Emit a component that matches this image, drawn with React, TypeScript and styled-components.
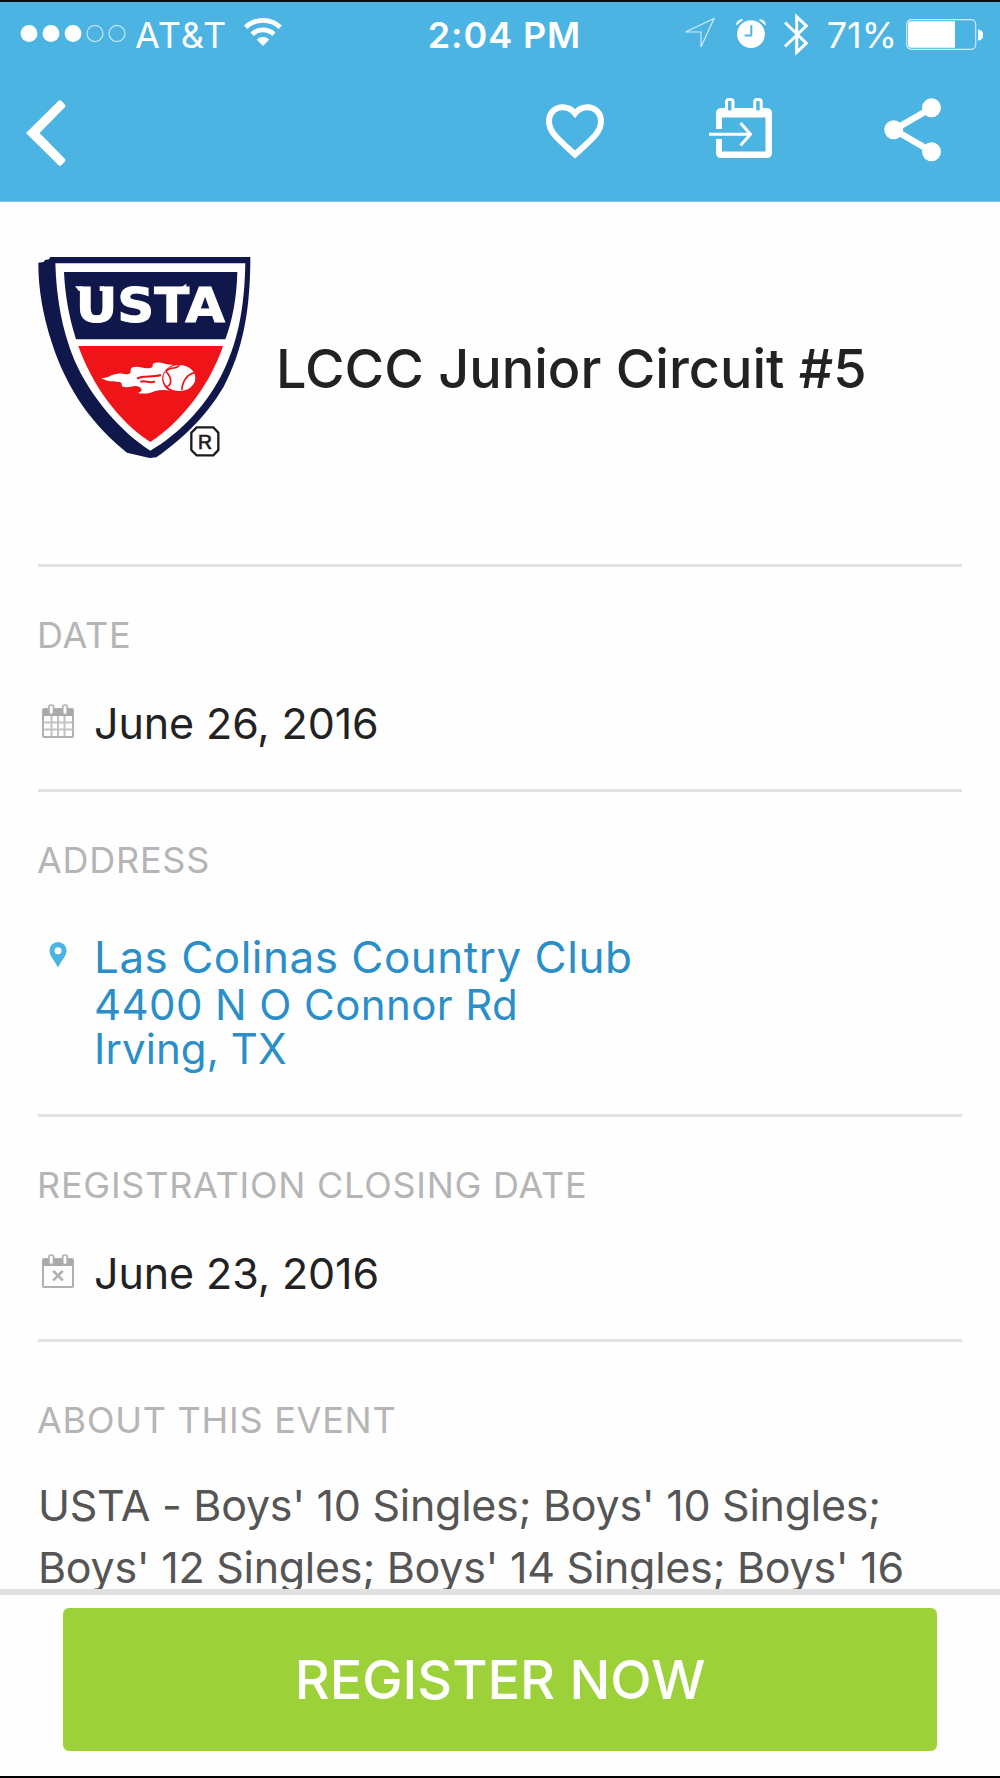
import React from 'react';
import styled, { createGlobalStyle } from 'styled-components';

const GlobalStyle = createGlobalStyle`
  * {
    box-sizing: border-box;
  }

  body {
    margin: 0;
    background: #fefefe;
    font-family: Inter, 'Liberation Sans', sans-serif;
  }

  svg {
    display: block;
    flex: none;
  }
`;

interface ITextProps {
  $spacing?: number,
}

interface ISectionProps {
  $height: number,
  $top?: number,
}

const SignalDots: React.FC = () => (
  <svg width='106' height='18' viewBox='0 0 106 18'>
    {[9, 31, 53].map(x => <circle key={x} cx={x} cy='8.5' r='8.4' fill='#fff' />)}
    {[75, 97].map(x => (
      <circle key={x} cx={x} cy='8.5' r='8' fill='none' stroke='#d4ecf8' strokeWidth='1.1' />
    ))}
  </svg>
);

const WifiIcon: React.FC = () => (
  <svg width='38' height='28' viewBox='0 0 38 28' fill='none' stroke='#fff' strokeWidth='4.8'>
    <path d='M1.7 9.2a25.4 25.4 0 0 1 34.6 0' />
    <path d='M8.1 16.2a16 16 0 0 1 21.8 0' />
    <path d='M19 28l-6.3-6.5a9.4 9.4 0 0 1 12.6 0z' fill='#fff' stroke='none' />
  </svg>
);

const LocationIcon: React.FC = () => (
  <svg width='32' height='33' viewBox='0 0 32 33' fill='none' stroke='#d4ecf8' strokeWidth='1.2'>
    <path d='M30 1.5L1.5 15H17v15z' />
  </svg>
);

const AlarmIcon: React.FC = () => (
  <svg width='30' height='30' viewBox='0 0 30 30' fill='#fff'>
    <circle cx='15' cy='15.2' r='13.9' />
    <path d='M.6 5.8A5 5 0 0 1 6.5.9zM29.4 5.8A5 5 0 0 0 23.5.9z' stroke='#fff' strokeWidth='1' />
    <path d='M15.3 6.2v10.4H8.6' fill='none' stroke='#4bb4e3' strokeWidth='2' />
  </svg>
);

const BluetoothIcon: React.FC = () => (
  <svg width='25' height='43' viewBox='0 0 25 43' fill='none' stroke='#fff' strokeWidth='3'>
    <path d='M1 9.5l21.3 20.7L12.7 39.3V3.7l9.6 9.1L1 33.5' />
  </svg>
);

const BatteryIcon: React.FC = () => (
  <svg width='77' height='31' viewBox='0 0 77 31'>
    <rect x='.7' y='.7' width='69' height='29.6' rx='4.5' fill='none' stroke='#d4ecf8' strokeWidth='1.2' />
    <path d='M5 2.2h44v26.6H5a3 3 0 0 1-3-3V5.2a3 3 0 0 1 3-3z' fill='#fff' />
    <path d='M72 10.5a5 5 0 0 1 0 11z' fill='#fff' />
  </svg>
);

const BackIcon: React.FC = () => (
  <svg width='40' height='66' viewBox='0 0 40 66'>
    <path d='M0 33L32.6.8q1.4-1.2 2.8 0l3.4 3.7q1.2 1.4 0 2.7L13.6 33l25.2 25.8q1.2 1.3 0 2.7l-3.4 3.7q-1.4 1.2-2.8 0z' fill='#fff' />
  </svg>
);

const HeartIcon: React.FC = () => (
  <svg width='58' height='55' viewBox='0 0 58 55' fill='none' stroke='#fff' strokeWidth='6'>
    <path d='M29 50.5C13 36 3 28.5 3 17.5C3 9 9 3.2 16.5 3.2C21.5 3.2 26 5.5 29 9.3C32 5.5 36.5 3.2 41.5 3.2C49 3.2 55 9 55 17.5C55 28.5 45 36 29 50.5z' />
  </svg>
);

const AddToCalendarIcon: React.FC = () => (
  <svg width='63' height='60' viewBox='0 0 63 60' fill='none' stroke='#fff'>
    <path d='M7 31V15.5q0-5.5 5.5-5.5h45q5.5 0 5.5 5.5v39q0 5.5-5.5 5.500h-45q-5.5 0-5.5-5.5V41h6v12.5h43.5v-34H13V31z' fill='#fff' stroke='none' />
    <rect x='17.5' y='1.5' width='6.5' height='12.5' rx='2.5' fill='#4bb4e3' strokeWidth='3' />
    <rect x='45.7' y='1.5' width='6.5' height='12.5' rx='2.5' fill='#4bb4e3' strokeWidth='3' />
    <path d='M0 36.3h41M31.5 25l10 11.3-10 11.3' strokeWidth='3' />
  </svg>
);

const ShareIcon: React.FC = () => (
  <svg width='58' height='64' viewBox='0 0 58 64' fill='#fff'>
    <path d='M47.5 10L10 31.7l37.5 21.8' fill='none' stroke='#fff' strokeWidth='6.5' />
    <circle cx='47.5' cy='9.8' r='9.5' />
    <circle cx='9.7' cy='31.7' r='9.5' />
    <circle cx='47.5' cy='53.7' r='9.5' />
  </svg>
);

const CalendarIcon: React.FC = () => (
  <svg width='32' height='34' viewBox='0 0 32 34' fill='none' stroke='#b0b0b0'>
    <rect x='1' y='5' width='30' height='28' rx='1' strokeWidth='2' />
    <path d='M1 5h30v7H1z' fill='#a9a9a9' stroke='none' />
    <path d='M9.5 12v20M16 12v20M22.5 12v20M1 18.5h30M1 25.5h30' stroke='#c2c2c2' strokeWidth='2' />
    <rect x='7' y='1' width='4.5' height='9.5' rx='2' fill='#fefefe' strokeWidth='1.7' />
    <rect x='20.7' y='1' width='4.5' height='9.5' rx='2' fill='#fefefe' strokeWidth='1.7' />
  </svg>
);

const CalendarCloseIcon: React.FC = () => (
  <svg width='32' height='34' viewBox='0 0 32 34' fill='none' stroke='#b0b0b0'>
    <rect x='1' y='5' width='30' height='28' rx='1' strokeWidth='2' />
    <path d='M1 5h30v7H1z' fill='#a9a9a9' stroke='none' />
    <rect x='7' y='1' width='4.5' height='9.5' rx='2' fill='#fefefe' strokeWidth='1.7' />
    <rect x='20.7' y='1' width='4.5' height='9.5' rx='2' fill='#fefefe' strokeWidth='1.7' />
    <path d='M11.2 16.8l9.6 9.6M20.8 16.8l-9.6 9.6' strokeWidth='2.6' />
  </svg>
);

const PinIcon: React.FC = () => (
  <svg width='18' height='26' viewBox='0 0 18 26'>
    <path
      d='M9 0a8.5 8.5 0 0 0-8.5 8.7C.5 14 6 19 9 25.5C12 19 17.5 14 17.5 8.7A8.5 8.5 0 0 0 9 0zm0 5.3a3.500 3.5 0 1 1 0 7a3.5 3.5 0 0 1 0-7z'
      fill='#4bb4e3'
      fillRule='evenodd'
    />
  </svg>
);

const UstaLogo: React.FC = () => (
  <svg width='215' height='202' viewBox='50 48 645 606'>
    <path d='M54 68L70 66L74 60L86 58L90 51H690C690 210 668 330 610 440C550 540 480 600 408 652L388 654L320 638C220 560 140 450 95 310C68 225 54 150 54 68z' fill='#10174a' />
    <path d='M105 70H675C672 210 652 310 600 412C552 502 476 582 390 632C300 575 210 470 162 360C124 270 108 170 105 70z' fill='#fff' />
    <path d='M131 96H651C649 170 638 235 615 298H167C146 232 134 165 131 96z' fill='#10174a' />
    <path d='M174 318H608C570 430 490 540 390 606C295 545 215 435 174 318z' fill='#ee1418' />
    <LogoText x='166' y='245' fontSize='142' textLength='448' lengthAdjust='spacingAndGlyphs'>USTA</LogoText>
    {/* small serifs on the U and the T */}
    <path d='M164 139h22v14h-10zM238 139h14v14h-14zM484 141l14-10v24h-14z' fill='#fff' />
    <path
      d='M242 413C262 417 274 401 292 401C306 400 315 405 327 401C336 397 325 386 338 382C354 376 370 388 390 384C404 381 390 371 405 368C424 364 440 376 458 374C430 386 420 410 428 430C434 444 440 450 450 453C432 448 420 450 405 453C390 460 372 463 352 459C366 455 368 446 356 440C342 434 330 444 312 441C298 440 310 430 298 426C280 422 262 428 242 413z'
      fill='#fff'
    />
    <path d='M350 416C370 404 392 414 422 405M360 425C378 420 388 432 404 424' fill='none' stroke='#ee1418' strokeWidth='6' />
    <ellipse cx='477' cy='414' rx='48' ry='39' fill='#fff' />
    <path d='M436 394C452 376 468 392 478 374M440 440C462 432 446 400 436 396M484 450C488 420 502 402 524 398' fill='none' stroke='#ee1418' strokeWidth='5' />
    <path d='M529 562H579L594 578V630L579 646H529L513 630V578z' fill='#fff' stroke='#1c1c1c' strokeWidth='7' />
    <RegisteredText x='533' y='627' fontSize='62' textLength='42' lengthAdjust='spacingAndGlyphs'>R</RegisteredText>
  </svg>
);

const App: React.FC = () => (
  <>
    <GlobalStyle />
    <Screen>
      <Header>
        <StatusBar>
          <StatusLeft>
            <SignalDots />
            <Carrier $spacing={1}>AT&amp;T</Carrier>
            <WifiIcon />
          </StatusLeft>
          <Clock $spacing={0.9}>2:04 PM</Clock>
          <StatusRight>
            <LocationIcon />
            <AlarmIcon />
            <BluetoothIcon />
            <Percent>71%</Percent>
            <BatteryIcon />
          </StatusRight>
        </StatusBar>
        <NavBar>
          <NavButton aria-label='Back'><BackIcon /></NavButton>
          <NavActions>
            <NavButton aria-label='Favorite'><HeartIcon /></NavButton>
            <NavButton aria-label='Add to calendar'><AddToCalendarIcon /></NavButton>
            <NavButton aria-label='Share'><ShareIcon /></NavButton>
          </NavActions>
        </NavBar>
      </Header>
      <Content>
        <Hero>
          <UstaLogo />
          <Title>LCCC Junior Circuit #5</Title>
        </Hero>
        <Section $height={225}>
          <Label>DATE</Label>
          <Row>
            <IconSlot><CalendarIcon /></IconSlot>
            <Value>June 26, 2016</Value>
          </Row>
        </Section>
        <Section $height={325}>
          <Label>ADDRESS</Label>
          <AddressRow>
            <IconSlot><PinIcon /></IconSlot>
            <Address>
              <AddressName>Las Colinas Country Club</AddressName>
              <AddressLine $spacing={0.4}>4400 N O Connor Rd</AddressLine>
              <AddressLine $spacing={0.1}>Irving, TX</AddressLine>
            </Address>
          </AddressRow>
        </Section>
        <Section $height={225}>
          <Label>REGISTRATION CLOSING DATE</Label>
          <Row>
            <IconSlot><CalendarCloseIcon /></IconSlot>
            <Value>June 23, 2016</Value>
          </Row>
        </Section>
        <Section $height={250} $top={58}>
          <Label>ABOUT THIS EVENT</Label>
          <About>
            <AboutLine>USTA - Boys' 10 Singles; Boys' 10 Singles;</AboutLine>
            <AboutLine>Boys' 12 Singles; Boys' 14 Singles; Boys' 16</AboutLine>
          </About>
        </Section>
      </Content>
      <Footer>
        <RegisterButton>REGISTER NOW</RegisterButton>
      </Footer>
    </Screen>
  </>
);

const Screen = styled.div`
  display: flex;
  flex-direction: column;
  width: 1000px;
  height: 1778px;
  overflow: hidden;
  border-top: 2px solid #0a0f12;
  border-bottom: 2px solid #000;
  background: #fefefe;
`;

const Header = styled.header`
  flex: none;
  height: 200px;
  background: #4bb4e3;
  border-bottom: 1px solid #86bdd8;
  color: #fff;
`;

const StatusBar = styled.div`
  display: grid;
  grid-template-columns: 1fr auto 1fr;
  align-items: center;
  height: 64px;
  padding: 0 17px 0 20px;
`;

const StatusLeft = styled.div`
  display: flex;
  align-items: center;

  svg:last-child {
    margin: -4px 0 0 17px;
  }
`;

const StatusText = styled.span<ITextProps>`
  font-size: 36px;
  line-height: 44px;
  margin-top: 1px;
  white-space: nowrap;
  letter-spacing: ${({ $spacing = 0 }) => $spacing}px;
`;

const Carrier = styled(StatusText)`
  margin-left: 9px;
  font-weight: 400;
`;

const Clock = styled(StatusText)`
  margin-left: 6px;
  font-weight: 600;
`;

const StatusRight = styled(StatusLeft)`
  justify-content: flex-end;

  svg:first-child {
    margin-top: -2px;
  }

  svg:nth-child(2) {
    margin: -1px 0 0 20px;
  }

  svg:nth-child(3) {
    margin-left: 18px;
  }

  svg:last-child {
    margin: 0 0 0 9px;
  }
`;

const Percent = styled(StatusText)`
  margin-left: 18px;
  font-weight: 400;
`;

const NavBar = styled.nav`
  display: flex;
  align-items: center;
  justify-content: space-between;
  height: 134px;
  padding: 0 58px 0 26px;
`;

const NavActions = styled.div`
  display: flex;
  align-items: flex-start;
  gap: 105px;
  margin-top: -6px;

  button:first-child {
    margin-top: 6px;
  }

  button:last-child {
    margin-left: 7px;
  }
`;

const NavButton = styled.button`
  padding: 0;
  border: 0;
  background: none;
`;

const Content = styled.main`
  flex: 1;
  min-height: 0;
  overflow: hidden;
  padding: 0 38px;
`;

const Hero = styled.div`
  display: flex;
  align-items: flex-start;
  height: 362px;
  padding-top: 54px;
  margin-left: -1px;
`;

const Title = styled.h1`
  margin: 78px 0 0 24px;
  color: #222;
  font-size: 54px;
  font-weight: 500;
  line-height: 70px;
  white-space: nowrap;
`;

const Section = styled.section<ISectionProps>`
  height: ${({ $height }) => $height}px;
  padding-top: ${({ $top = 48 }) => $top}px;
  border-top: 3px solid #e2e2e2;
`;

const Label = styled.div`
  margin-left: -1px;
  color: #b5b5b5;
  font-size: 36px;
  letter-spacing: 0.75px;
  line-height: 40px;
  white-space: nowrap;
`;

const Row = styled.div`
  display: flex;
  align-items: center;
  height: 50px;
  margin-top: 43px;

  svg {
    margin-top: -5px;
  }
`;

const AddressRow = styled(Row)`
  align-items: flex-start;
  height: auto;
  margin-top: 52px;

  svg {
    margin-top: 10px;
  }
`;

const IconSlot = styled.span`
  display: flex;
  justify-content: center;
  width: 32px;
  margin: 0 20px 0 4px;
`;

const Value = styled.span`
  color: #222;
  font-size: 43px;
  letter-spacing: -0.1px;
  line-height: 50px;
  white-space: nowrap;
`;

const Address = styled.div`
  color: #2a8fc8;
  white-space: nowrap;
`;

const AddressName = styled.div`
  font-size: 44px;
  letter-spacing: 0.5px;
  line-height: 51px;
`;

const AddressLine = styled.div<ITextProps>`
  font-size: 42px;
  letter-spacing: ${({ $spacing = 0 }) => $spacing}px;
  line-height: 44px;
`;

const About = styled.div`
  margin: 34px 0 0;
`;

const AboutLine = styled.div`
  color: #555;
  font-size: 43px;
  letter-spacing: -0.28px;
  line-height: 62px;
  white-space: nowrap;
`;

const Footer = styled.footer`
  display: flex;
  justify-content: center;
  flex: none;
  height: 187px;
  padding-top: 13px;
  border-top: 6px solid #e0e0e0;
`;

const RegisterButton = styled.button`
  width: 874px;
  height: 143px;
  padding: 0;
  border: 0;
  border-radius: 6px;
  background: #9dd13a;
  color: #fff;
  font-family: inherit;
  font-size: 54px;
  font-weight: 500;
`;

const LogoText = styled.text`
  fill: #fff;
  stroke: #fff;
  stroke-width: 3px;
  font-family: 'DejaVu Sans', sans-serif;
  font-weight: 700;
`;

const RegisteredText = styled.text`
  fill: #1c1c1c;
  stroke: #1c1c1c;
  stroke-width: 2px;
  font-family: 'Liberation Sans', sans-serif;
`;

export default App;
